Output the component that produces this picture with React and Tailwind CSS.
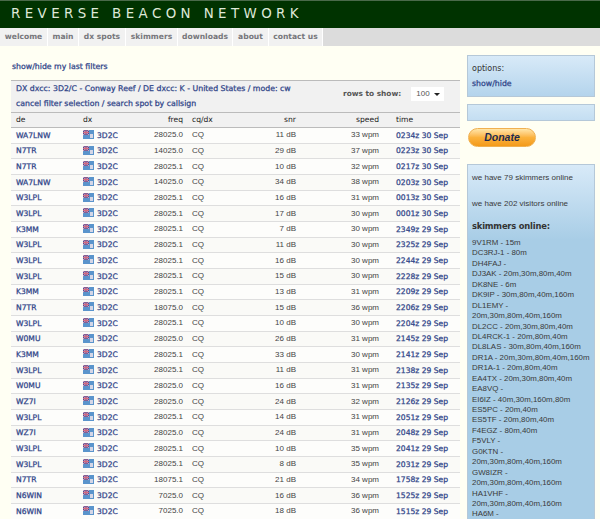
const rows = [
["WA7LNW","28025.0",11,33,"0234z 30 Sep"],["N7TR","14025.0",29,37,"0223z 30 Sep"],["N7TR","28025.1",10,32,"0217z 30 Sep"],["WA7LNW","14025.0",34,38,"0203z 30 Sep"],["W3LPL","28025.1",16,31,"0013z 30 Sep"],["W3LPL","28025.1",17,30,"0001z 30 Sep"],["K3MM","28025.1",7,30,"2349z 29 Sep"],["W3LPL","28025.1",11,30,"2325z 29 Sep"],["W3LPL","28025.1",16,30,"2244z 29 Sep"],["W3LPL","28025.1",15,30,"2228z 29 Sep"],["K3MM","28025.1",13,31,"2209z 29 Sep"],["N7TR","18075.0",15,36,"2206z 29 Sep"],["W3LPL","28025.1",10,30,"2204z 29 Sep"],["W0MU","28025.0",26,31,"2145z 29 Sep"],["K3MM","28025.1",33,30,"2141z 29 Sep"],["W3LPL","28025.1",11,31,"2138z 29 Sep"],["W0MU","28025.0",16,31,"2135z 29 Sep"],["WZ7I","28025.0",24,32,"2126z 29 Sep"],["W3LPL","28025.1",14,31,"2051z 29 Sep"],["WZ7I","28025.0",24,31,"2048z 29 Sep"],["W3LPL","28025.1",10,35,"2041z 29 Sep"],["W3LPL","28025.1",8,35,"2031z 29 Sep"],["N7TR","18075.1",21,34,"1758z 29 Sep"],["N6WIN","7025.0",16,36,"1525z 29 Sep"],["N6WIN","7025.0",18,36,"1515z 29 Sep"],
];
const nav = [["welcome",48],["main",31],["dx spots",47],["skimmers",52],["downloads",55],["about",36],["contact us",54]];
const skimmers = ["9V1RM - 15m","DC3RJ-1 - 80m","DH4FAJ -","DJ3AK - 20m,30m,80m,40m","DK8NE - 6m","DK9IP - 30m,80m,40m,160m","DL1EMY -","20m,30m,80m,40m,160m","DL2CC - 20m,30m,80m,40m","DL4RCK-1 - 20m,80m,40m","DL8LAS - 30m,80m,40m,160m","DR1A - 20m,30m,80m,40m,160m","DR1A-1 - 20m,80m,40m","EA4TX - 20m,30m,80m,40m","EA8VQ -","EI6IZ - 40m,30m,160m,80m","ES5PC - 20m,40m","ES5TF - 20m,80m,40m","F4EGZ - 80m,40m","F5VLY -","G0KTN -","20m,30m,80m,40m,160m","GW8IZR -","20m,30m,80m,40m,160m","HA1VHF -","20m,30m,80m,40m,160m","HA6M -"];
const grid = "grid grid-cols-[67px_14px_86px_113px_83px_1fr] items-center pl-[5px]";
const link = "font-['DejaVu_Sans',sans-serif] text-[#2f4488] [-webkit-text-stroke:0.25px_#2f4488] whitespace-nowrap";

function Flag() {
  return (
    <svg width="11" height="9" viewBox="0 0 11 9" className="shrink-0 -mt-[2px]">
      <rect width="11" height="9" fill="#5a94cc" />
      <rect width="6" height="5" fill="#4a4f98" />
      <path d="M0 0L6 5M6 0L0 5" stroke="#e2a6bc" strokeWidth="1" />
      <path d="M3 0V5M0 2.5H6" stroke="#d46a80" strokeWidth="1" />
      <rect x="7" y="4" width="3" height="4" fill="#d4d6e6" />
    </svg>
  );
}

export default function App() {
  return (
    <div className="w-[600px] h-[519px] overflow-hidden bg-[#fffff3] text-[8px] text-[#444] font-['Liberation_Sans',Arial,sans-serif]">
      <header className="h-[28px] bg-[#003300] border-t border-[#4a6a4a] flex items-center pl-[11px]">
        <h1 className="font-['DejaVu_Sans',sans-serif] text-[13.4px] leading-none font-normal tracking-[4.4px] text-[#dfe8d8] whitespace-nowrap -mt-[1px]">REVERSE BEACON NETWORK</h1>
      </header>
      <nav className="h-[18px] bg-[#dcdcdc] flex font-['DejaVu_Sans',sans-serif] text-[7.6px] font-bold">
        {nav.map(([t, w]) => (
          <a key={t} style={{ width: w }} className="h-full bg-[#f1f1f1] border-r border-white flex items-center justify-center whitespace-nowrap text-[#77777c]">{t}</a>
        ))}
      </nav>
      <div className="flex pl-[11px] pr-[5px]">
        <main className="w-[449px] shrink-0">
          <a className={"block mt-[16px] mb-[8px] h-[10px] leading-[10px] pl-px text-[7.8px] " + link}>show/hide my last filters</a>
          <section className="border-t border-[#bbb]">
            <div className="relative h-[31px] bg-[#f1f1f1] pl-[5px] text-[7.8px] leading-[15px]">
              <div className={link}>DX dxcc: 3D2/C - Conway Reef / DE dxcc: K - United States / mode: cw</div>
              <div className={link}>cancel filter selection / search spot by callsign</div>
              <div className="absolute left-[332px] top-[6px] flex items-center gap-[10px] font-['DejaVu_Sans',sans-serif] font-bold text-[7.4px] text-[#555] leading-none">
                <span className="whitespace-nowrap">rows to show:</span>
                <span className="w-[33px] h-[14px] bg-white flex items-center justify-between pl-[5px] pr-[4px] text-[8px] font-normal font-['Liberation_Sans',sans-serif]">
                  100
                  <span className="border-x-[3px] border-t-[3px] border-x-transparent border-t-[#222]" />
                </span>
              </div>
            </div>
            <div className={grid + " h-[16px] bg-[#f1f1f1] border-y border-[#bbb] font-['DejaVu_Sans',sans-serif] text-[7.6px] text-[#222] [&>*]:whitespace-nowrap"}>
              <span>de</span><span>dx</span><span className="text-right col-start-3">freq</span><span className="text-right col-start-4 flex justify-between"><span className="pl-[9px]">cq/dx</span><span>snr</span></span><span className="text-right">speed</span><span className="pl-[17px]">time</span>
            </div>
            {rows.map((r, i) => (
              <div key={i} className={grid + " h-[15.68px] border-b border-[#dedede] [&>*]:whitespace-nowrap " + (i % 2 ? "bg-[#fafaf7]" : "bg-[#fdfdfb]")}>
                <a className={"text-[7.6px] " + link}>{r[0]}</a>
                <Flag />
                <span className="flex items-center justify-between">
                  <a className={"text-[7.6px] " + link}>3D2C</a>
                  <span>{r[1]}</span>
                </span>
                <span className="flex items-center justify-between">
                  <span className="pl-[9px]">CQ</span>
                  <span>{r[2]} dB</span>
                </span>
                <span className="text-right">{r[3]} wpm</span>
                <a className={"pl-[17px] text-[7.6px] " + link}>{r[4]}</a>
              </div>
            ))}
          </section>
        </main>
        <aside className="ml-[7px] w-[128px] shrink-0 pt-[9px]">
          <div className="h-[42px] border border-[#b5c8d8] bg-gradient-to-b from-[#d8eaf8] to-[#b4d4ec] pl-[4px] pt-[7px]">
            <p className="text-[8px] leading-[11px] text-[#333] font-['DejaVu_Sans',sans-serif]">options:</p>
            <a className={"block mt-[5px] text-[7.8px] leading-[10px] " + link}>show/hide</a>
          </div>
          <div className="mt-[7px] h-[17px] border border-[#b5c8d8] bg-gradient-to-b from-[#d4e8f6] to-[#c4def2]" />
          <button className="mt-[7px] ml-px block w-[68px] h-[19px] rounded-full border border-[#f0b050] bg-gradient-to-b from-[#ffe6a8] via-[#fbb23c] to-[#f39a18] text-[10.5px] leading-none font-bold italic text-[#1c2a50] font-['Liberation_Sans',sans-serif]">Donate</button>
          <div className="mt-[17px] border border-[#b5c8d8] bg-gradient-to-b from-[#d8eaf8] to-[#a8cde6] from-0% to-[20%] pl-[4px] pt-[8px] pb-[20px] text-[#3a3a3a]">
            <p className="text-[8px] leading-[10px] whitespace-nowrap">we have 79 skimmers online</p>
            <p className="mt-[16px] text-[8px] leading-[10px] whitespace-nowrap">we have 202 visitors online</p>
            <p className="mt-[12px] mb-[6px] text-[8.4px] leading-[11px] font-bold text-[#333] font-['DejaVu_Sans',sans-serif] tracking-[-0.2px]">skimmers online:</p>
            {skimmers.map((s, i) => (
              <p key={i} className="h-[10.45px] leading-[10.45px] text-[7.9px] whitespace-nowrap">{s}</p>
            ))}
          </div>
        </aside>
      </div>
    </div>
  );
}
